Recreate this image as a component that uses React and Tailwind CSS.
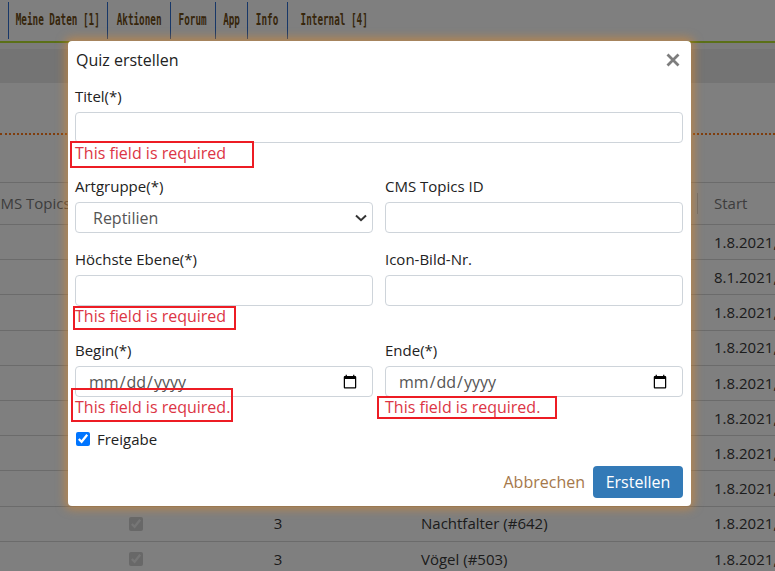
import React from "react";

const navItems = [
  { label: "Meine Daten [1]", w: "w-[99px]" },
  { label: "Aktionen", w: "w-[63px]" },
  { label: "Forum", w: "w-[45px]" },
  { label: "App", w: "w-[32px]" },
  { label: "Info", w: "w-[40px]" },
  { label: "Internal [4]", w: "w-[94px]" },
];

const rows = [
  { name: "Reptilien (#504)", start: "1.8.2021," },
  { name: "Amphibien (#501)", start: "8.1.2021," },
  { name: "Säugetiere (#502)", start: "1.8.2021," },
  { name: "Libellen (#640)", start: "1.8.2021," },
  { name: "Tagfalter (#641)", start: "1.8.2021," },
  { name: "Heuschrecken (#643)", start: "1.8.2021," },
  { name: "Käfer (#644)", start: "1.8.2021," },
  { name: "Pflanzen (#700)", start: "1.8.2021," },
  { name: "Nachtfalter (#642)", start: "1.8.2021," },
  { name: "Vögel (#503)", start: "1.8.2021," },
];

const Background = () => (
  <div className="font-['Open_Sans',sans-serif] text-[15px]">
    <div className="flex h-[41px] items-center bg-white pl-[8px]">
      {navItems.map((n) => (
        <div key={n.label} className={`${n.w} flex h-[37px] items-center justify-center border-l border-[#2f6fd0]`}>
          <span className="inline-block scale-x-[0.62] whitespace-nowrap font-['DejaVu_Sans_Mono',monospace] text-[15px] font-bold text-[#6e4c16]">
            {n.label}
          </span>
        </div>
      ))}
    </div>
    <div className="h-[2px] bg-[#b6e030]" />
    <div className="h-[6px] bg-[#f6f6f6]" />
    <div className="h-[34px] bg-[#e8e8e8]" />
    <div className="h-[52px] border-b-[2px] border-dotted border-[#ff7a1a] bg-white" />
    <div className="h-[47px] bg-white" />
    <div className="-ml-[20px] w-[820px] bg-white text-[#383838]">
      <div className="flex h-[43px] items-center border-y border-[#d6d6d6] text-[#7a7a7a]">
        <div className="w-[120px] shrink-0 whitespace-nowrap pl-[11px]">CMS Topics ID</div>
        <div className="w-[72px] shrink-0" />
        <div className="w-[212px] shrink-0" />
        <div className="w-[313px] shrink-0" />
        <div className="flex items-center">
          <span className="h-[21px] border-l border-[#d6d6d6]" />
          <span className="pl-[16px]">Start</span>
        </div>
      </div>
      {rows.map((r) => (
        <div key={r.name} className="flex h-[35.2px] items-center border-b border-[#d6d6d6]">
          <div className="w-[120px] shrink-0" />
          <div className="flex w-[72px] shrink-0 justify-center">
            <input type="checkbox" defaultChecked disabled className="h-[14px] w-[14px]" />
          </div>
          <div className="w-[212px] shrink-0 text-center">3</div>
          <div className="w-[313px] shrink-0 whitespace-nowrap pl-[37px]">{r.name}</div>
          <div className="whitespace-nowrap pl-[17px]">{r.start}</div>
        </div>
      ))}
    </div>
  </div>
);

const Field = ({ label, children, error }) => (
  <div>
    <div className="mb-[5px] h-[21px] text-[15px] leading-[21px] text-[#222]">{label}</div>
    {children}
    {error && <div className="h-[21px] whitespace-nowrap text-[16px] leading-[21px] text-[#dc3545]">{error}</div>}
  </div>
);

const inputCls =
  "block h-[31px] w-full rounded-[4px] border border-[#ced4da] bg-white px-3 text-[16px] text-[#555] outline-none";

const Mark = ({ className }) => (
  <div className={`pointer-events-none absolute border-2 border-[#ed1c24] ${className}`} />
);

const Modal = () => (
  <div className="absolute left-[68px] top-[41px] w-[623px] rounded-[4px] bg-white pb-[8px] pl-[7px] pr-[8px] font-['Open_Sans',sans-serif] text-[15px] shadow-[0_0_10px_3px_rgba(230,140,40,0.55)]">
    <div className="mt-[8px] flex h-[22px] items-center justify-between pl-[1px]">
      <span className="text-[16px] leading-[22px] text-[#222]">Quiz erstellen</span>
      <svg width="14" height="14" viewBox="0 0 14 14" className="mr-[3px]">
        <path d="M1.5 1.5 L12.5 12.5 M12.5 1.5 L1.5 12.5" stroke="#7d7d7d" strokeWidth="2.8" />
      </svg>
    </div>

    <div className="mt-[15px]">
      <Field label="Titel(*)" error="This field is required">
        <input className={inputCls} />
      </Field>
    </div>

    <div className="mt-[12px] grid grid-cols-2 gap-x-[12px]">
      <Field label="Artgruppe(*)">
        <div className="relative">
          <select className={`${inputCls} appearance-none pl-[17px]`} defaultValue="Reptilien">
            <option>Reptilien</option>
            <option>Amphibien</option>
            <option>Vögel</option>
          </select>
          <svg width="12" height="8" viewBox="0 0 12 8" className="absolute right-[6px] top-[12px]">
            <path d="M1 1.5 L6 6.2 L11 1.5" fill="none" stroke="#333" strokeWidth="2" />
          </svg>
        </div>
      </Field>
      <Field label="CMS Topics ID">
        <input className={inputCls} />
      </Field>
    </div>

    <div className="mt-[16px] grid grid-cols-2 gap-x-[12px]">
      <Field label="Höchste Ebene(*)" error="This field is required">
        <input className={inputCls} />
      </Field>
      <Field label="Icon-Bild-Nr.">
        <input className={inputCls} />
      </Field>
    </div>

    <div className="mt-[13px] grid grid-cols-2 gap-x-[12px]">
      <Field label="Begin(*)" error="This field is required.">
        <input type="date" className={inputCls} />
      </Field>
      <Field label="Ende(*)" error="This field is required.">
        <input type="date" className={inputCls} />
      </Field>
    </div>

    <label className="mt-[11px] flex h-[20px] items-center gap-[7px] pl-[1px] text-[#222]">
      <input type="checkbox" defaultChecked className="h-[14px] w-[14px]" />
      Freigabe
    </label>

    <div className="mt-[17px] flex items-center justify-end gap-[8px]">
      <button className="px-0 text-[16px] text-[#a5784a]">Abbrechen</button>
      <button className="h-[32px] w-[90px] rounded-[4px] bg-[#337ab7] text-[16px] text-white">Erstellen</button>
    </div>

    <Mark className="left-[2px] top-[100px] h-[27px] w-[184px]" />
    <Mark className="left-[5px] top-[265px] h-[24px] w-[163px]" />
    <Mark className="left-[3px] top-[347px] h-[34px] w-[162px]" />
    <Mark className="left-[309px] top-[355px] h-[23px] w-[180px]" />
  </div>
);

export default function App() {
  return (
    <div className="relative h-[571px] w-[775px] overflow-hidden bg-white">
      <Background />
      <div className="absolute inset-0 bg-black/50" />
      <Modal />
    </div>
  );
}
